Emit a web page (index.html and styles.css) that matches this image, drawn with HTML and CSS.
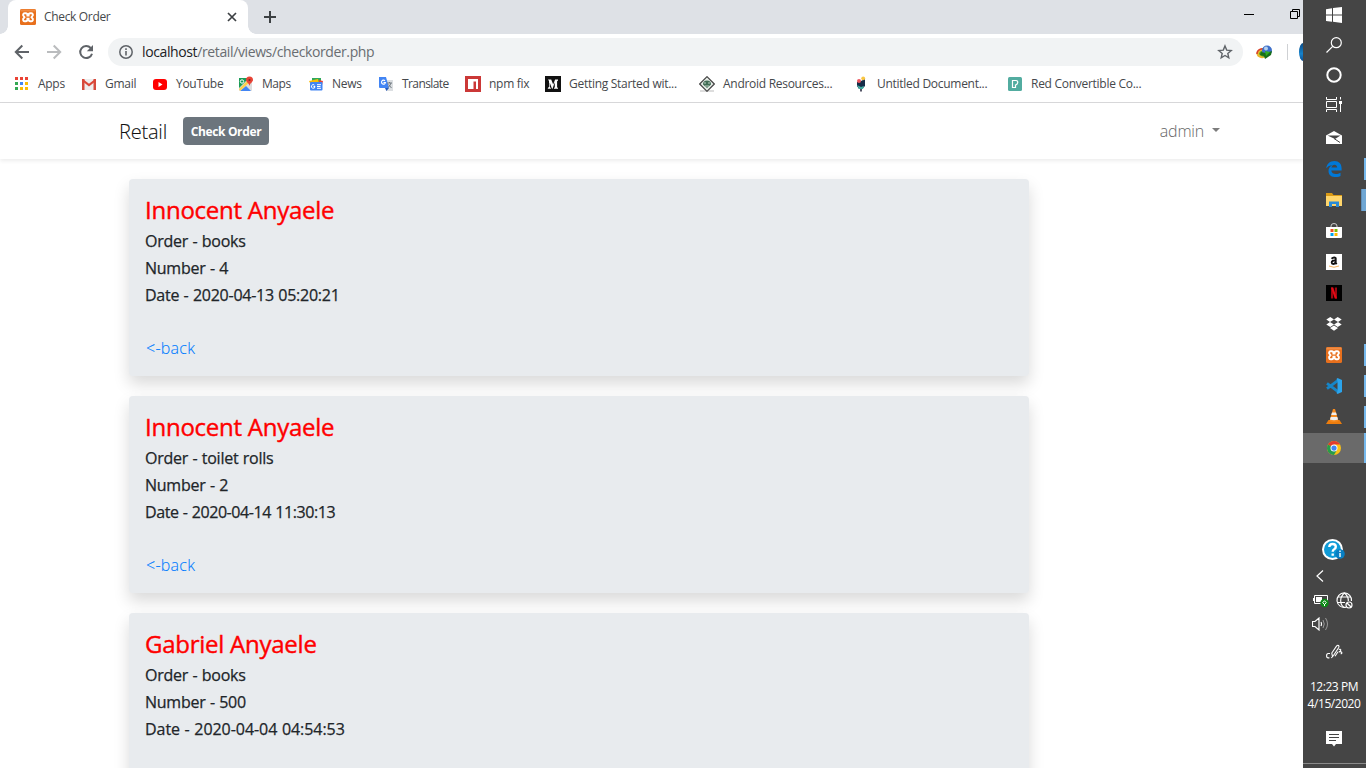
FILE: index.html
```html
<!DOCTYPE html>
<html lang="en">
<head>
<meta charset="utf-8">
<title>Check Order</title>
<link rel="stylesheet" href="styles.css">
</head>
<body>
<svg class="defs" width="0" height="0">
  <symbol id="xampp" viewBox="0 0 16 16"><rect width="16" height="16" rx="1.5" fill="#e8701d"/><rect x=".5" y=".5" width="15" height="2" fill="#f08c45"/><path d="M4.600 4.200h1.200a1.600 1.600 0 0 1 1.600 1.600v.8h1.200v-.8a1.600 1.600 0 0 1 1.600-1.600h1.200a1.700 1.700 0 0 1 .8 3.100l-.7.9.7.9a1.700 1.700 0 0 1-.8 3.100h-1.200a1.600 1.600 0 0 1-1.600-1.600v-.8H7.400v.8a1.600 1.600 0 0 1-1.600 1.600H4.600a1.700 1.700 0 0 1-.8-3.100l.7-.9-.7-.9a1.700 1.700 0 0 1 .8-3.100z" fill="none" stroke="#fff" stroke-width="1.900"/></symbol>
</svg>
<div class="screen">
<main class="browser">
  <header class="tabs">
    <div class="tab">
      <svg class="i16"><use href="#xampp"/></svg>
      <span class="tab-title">Check Order</span>
      <svg class="tab-close" width="10" height="10" viewBox="0 0 10 10"><path d="M1 1l8 8M9 1l-8 8" stroke="#3c4043" stroke-width="1.700"/></svg>
    </div>
    <svg class="new-tab" width="12" height="12" viewBox="0 0 12 12"><path d="M6 0v12M0 6h12" stroke="#3c4043" stroke-width="2"/></svg>
    <svg class="win-min" width="10" height="11" viewBox="0 0 10 11"><path d="M0 5.500h10" stroke="#000"/></svg>
    <svg class="win-max" width="10" height="10" viewBox="0 0 10 10"><path d="M.5 2.500h7v7h-7zM2.500 2.500v-2h7v7h-2" fill="none" stroke="#000"/></svg>
  </header>
  <div class="toolbar">
    <svg class="back" width="16" height="16" viewBox="0 0 16 16"><path d="M15 8H2M8.300 1.500L1.800 8l6.500 6.500" fill="none" stroke="#5f6368" stroke-width="2"/></svg>
    <svg class="forward" width="16" height="16" viewBox="0 0 16 16"><path d="M1 8h13M7.700 1.500L14.200 8l-6.500 6.500" fill="none" stroke="#babcbe" stroke-width="2"/></svg>
    <svg class="reload" width="16" height="16" viewBox="0 0 16 16"><path d="M12.700 4A6 6 0 1 0 14 9.700" fill="none" stroke="#5f6368" stroke-width="2"/><path d="M15 1v6.200H8.800z" fill="#5f6368"/></svg>
    <div class="omnibox">
      <svg width="16" height="16" viewBox="0 0 16 16"><circle cx="8" cy="8" r="6.200" fill="none" stroke="#5f6368" stroke-width="1.500"/><path d="M8 7v4.500M8 4.300v1.600" stroke="#5f6368" stroke-width="1.600"/></svg>
      <span class="url"><b>localhost</b>/retail/views/checkorder.php</span>
      <svg class="star" width="16" height="16" viewBox="0 0 16 16"><path d="M8 1.900l1.700 4.200 4.500.4-3.400 2.900 1 4.400L8 11.500l-3.800 2.300 1-4.400-3.400-2.900 4.500-.4z" fill="none" stroke="#5f6368" stroke-width="1.400"/></svg>
    </div>
    <svg class="idm" width="18" height="16" viewBox="0 0 18 16"><ellipse cx="7" cy="9" rx="6.500" ry="5" fill="#e7b72c" transform="rotate(-15 7 9)"/><path d="M1 10a6 5 0 0 1 8-5" stroke="#d9402d" stroke-width="1.500" fill="none"/><path d="M3 10q1-4 6-3l1 6q-5 0-7-3z" fill="#46a21b"/><circle cx="11" cy="6.500" r="5" fill="#3e70ca"/><circle cx="10" cy="4.500" r="2" fill="#b4d0ed"/><path d="M5 8l5 1 6-2-1 4-6 4-1-3-4-1z" fill="#176f18"/><path d="M9 7l5 1-4 4z" fill="#2fae21"/></svg>
    <i class="divider"></i>
    <div class="avatar"></div>
  </div>
  <nav class="bookmarks">
    <a><svg class="i16" viewBox="0 0 16 16"><path d="M1 1h3v3H1zM6 1h3v3H6zM11 1h3v3h-3z" fill="#ea4335"/><path d="M1 6h3v3H1zM1 11h3v3H1z" fill="#34a853"/><path d="M6 6h3v3H6z" fill="#4285f4"/><path d="M11 6h3v3h-3zM11 11h3v3h-3zM6 11h3v3H6z" fill="#fbbc05"/></svg>Apps</a>
    <a><svg class="i16" viewBox="0 0 16 16"><path d="M2 3h12v11H2z" fill="#eee"/><path d="M1 14V3h2.500v11zM12.500 14V3H15v11z" fill="#d54b3d"/><path d="M1.500 4L8 9l6.500-5" fill="none" stroke="#dc4738" stroke-width="2.200"/></svg>Gmail</a>
    <a><svg class="i16" viewBox="0 0 16 16"><rect x="1" y="3" width="14" height="11" rx="3" fill="#f00"/><path d="M6.500 6v5l4-2.500z" fill="#fff"/></svg>YouTube</a>
    <a class="maps"><svg class="i16" viewBox="0 0 16 16"><rect x="1" y="2" width="13" height="13" rx="1" fill="#ddd"/><path d="M1 2h10L1 12z" fill="#1b9c57"/><path d="M2 15l6-5 5 5z" fill="#4285f4"/><path d="M1 13L11 3l2 2L2 15z" fill="#ffd04b"/><circle cx="4" cy="5.500" r="1.700" fill="none" stroke="#fff"/><path d="M8 4a3.500 3.500 0 0 1 7 0c0 2-3 3-3.500 6C11 7 8 6 8 4z" fill="#e94335"/><circle cx="11.500" cy="4" r="1.100" fill="#842d24"/></svg>Maps</a>
    <a><svg class="i16" viewBox="0 0 16 16"><path d="M4 2h9v5H4z" fill="#2fa85a"/><path d="M1 5l9-2 1 4H2z" fill="#fbbc05"/><path d="M11 4l4 1-1 4h-3z" fill="#ea4335"/><rect x="2" y="6" width="12.500" height="8.500" rx="1" fill="#4285f4"/><path d="M6.500 9.200A1.800 1.800 0 1 0 7 10.500H5.500M9 8.700h4M9 10.500h3.500M9 12.300h4" fill="none" stroke="#fff"/></svg>News</a>
    <a class="translate"><svg class="i16" viewBox="0 0 16 16"><path d="M6 4h9v11H8z" fill="#dcdfe2"/><path d="M1 1h7l3 11H2q-1 0-1-1z" fill="#4285f4"/><path d="M7 12h4l-2.500 3z" fill="#2559b8"/><path d="M7 4.800A2 2 0 1 0 7.500 6.500H5.500" fill="none" stroke="#fff" stroke-width="1.100"/><path d="M9 7h5M11.500 6v1M13 7q-1 3-3 4.500M10.500 8.500l3 3.500" fill="none" stroke="#707980"/></svg>Translate</a>
    <a><svg class="i16" viewBox="0 0 16 16"><path fill="#cb3837" d="M0 0h16v16H0z"/><path fill="#fff" d="M3 3h10v10h-2V5.500H8.500V13H3z"/></svg>npm fix</a>
    <a><svg class="i16" viewBox="0 0 16 16"><path fill="#111" d="M0 0h16v16H0z"/><path d="M3 3.500h3.200l2 5 1.900-5H13v1l-.9.800v6l.9.700v.8H9V12l.8-.7V6.200L7.500 12.800H7L4.700 6.500v4.300l1.200 1.500v.5H2.800v-.5L4 10.800V5z" fill="#fff"/></svg>Getting Started wit...</a>
    <a><svg class="i16" viewBox="0 0 16 16"><path d="M1 14h14v2H1z" fill="#ddd"/><path d="M8 .7L15.300 8 8 15.300.7 8z" fill="#e7ede8" stroke="#444" stroke-width="1.200"/><path d="M4 8.500a4 4 0 0 1 8 0L8 12z" fill="#426d56"/><path d="M5 7h2M9 7h2M6 10h4" stroke="#bcd0c1"/></svg>Android Resources...</a>
    <a><svg class="i16" viewBox="0 0 16 16"><path d="M4 6l4-1 4-2v7l-3 3H6l-2-3z" fill="#152c48"/><circle cx="6" cy="5" r="2" fill="#ed555f"/><circle cx="10.200" cy="2.300" r="1.900" fill="#f9c642"/><path d="M4 9l4 2 3-1-1 3H6z" fill="#40aaa0"/><path d="M7 13h2v2.500H7z" fill="#556"/></svg>Untitled Document...</a>
    <a><svg class="i16" viewBox="0 0 16 16"><rect x="1" y="1" width="14" height="14" rx="1.500" fill="#52aca0"/><path d="M5.500 4.500h3.500q2 0 1.700 2.200-.3 1.800-2.200 2.300v2.500h-3z" fill="none" stroke="#fff" stroke-width="1.200"/></svg>Red Convertible Co...</a>
  </nav>
  <section class="page">
    <header class="navbar">
      <span class="brand">Retail</span><span class="check">Check Order</span>
      <span class="admin">admin</span><i class="caret"></i>
    </header>
    <div class="cards">
      <article class="card"><h4>Innocent Anyaele</h4><h6>Order - books</h6><h6>Number - 4</h6><h6>Date - 2020-04-13 05:20:21</h6><a>&lt;-back</a></article>
      <article class="card"><h4>Innocent Anyaele</h4><h6>Order - toilet rolls</h6><h6>Number - 2</h6><h6 class="narrow">Date - 2020-04-14 11:30:13</h6><a>&lt;-back</a></article>
      <article class="card"><h4>Gabriel Anyaele</h4><h6>Order - books</h6><h6>Number - 500</h6><h6 class="wide">Date - 2020-04-04 04:54:53</h6></article>
    </div>
  </section>
</main>
<aside class="taskbar">
  <div class="sys"><svg class="i16" viewBox="0 0 16 16"><path fill="#fff" d="M0 2.200L6 1.300v6.200H0zM7 1.100L16 0v7.500H7zM0 8.500h6v6.200l-6-.8zM7 8.500h9V16l-9-1.200z"/></svg></div>
  <div class="sys"><svg class="i16" viewBox="0 0 16 16"><g fill="none" stroke="#fff" stroke-width="1.200"><circle cx="10.300" cy="5.700" r="5"/><path d="M6.700 9.300L.5 15.500"/></g></svg></div>
  <div class="sys"><svg class="i16" viewBox="0 0 16 16"><circle cx="8" cy="8" r="6.700" fill="none" stroke="#fff" stroke-width="2"/></svg></div>
  <div class="sys"><svg class="i16" viewBox="0 0 16 16"><g fill="none" stroke="#fff"><path d="M.5 0v2.500h10V0M.5 4.500h10v6H.5zM.5 15v-2.500h10V15M14.500 0v2.500M14.500 7v8"/></g><path fill="#fff" d="M13 4h3v3h-3z"/></svg></div>
  <div class="mail"><svg class="i16" viewBox="0 0 16 16"><path fill="#fff" d="M0 5.500L8 1l8 4.500V14H0z"/><path fill="#454545" d="M1.500 5.500h13L9 9z"/><path d="M8 8.500l6 4" stroke="#454545"/></svg></div>
  <div class="app run"><svg class="i16" viewBox="0 0 16 16"><path fill="#0078d7" d="M.2 7.300C.8 2.800 4 0 8.400 0 13 0 15.600 3.100 15.600 7.200v2.300H5.300c.2 4 5.800 4.400 9.200 2.200v3.200c-5 2.600-12 1-12-5 0-2.600 1.500-4.600 3.700-5.600Q2.800 4.100.2 7.300zM5.400 6.600h5.800c0-3.900-5.300-3.900-5.800 0z"/></svg></div>
  <div class="app run multi"><svg class="i16" viewBox="0 0 16 16"><path fill="#d99a16" d="M0 1h6l1.500 2H16v3H0z"/><path fill="#ffd66b" d="M0 4h16v10H0z"/><path fill="#2b8bd6" d="M3 15V9.500h10V15h-3v-3H6v3z"/></svg></div>
  <div class="app"><svg class="i16" viewBox="0 0 16 16"><path d="M5 5V3q0-2.500 3-2.500T11 3v2" fill="none" stroke="#ccc"/><path fill="#fff" d="M0 4h16v10q0 1-1 1H1q-1 0-1-1z"/><path fill="#f25022" d="M4.500 6h3v3h-3z"/><path fill="#7fba00" d="M8.500 6h3v3h-3z"/><path fill="#00a4ef" d="M4.500 10h3v3h-3z"/><path fill="#ffb900" d="M8.500 10h3v3h-3z"/></svg></div>
  <div class="app"><svg class="i16" viewBox="0 0 16 16"><path fill="#fff" d="M0 0h16v16H0z"/><path d="M5.500 4.700Q8 2.500 9.700 4.200V9l1 1.200M9.500 6.500C7 6.300 5.700 7 5.700 8.500c0 2 2.800 2 3.800 0" fill="none" stroke="#111" stroke-width="1.900"/><path d="M3 12q5 2.500 10 0" fill="none" stroke="#f6b45e"/></svg></div>
  <div class="app"><svg class="i16" viewBox="0 0 16 16"><path d="M0 0h16v16H0z"/><path fill="#9f0710" d="M5 2.500h2.200v11H5zM8.800 2.500H11v11H8.800z"/><path fill="#e50914" d="M5 2.500h2.200l3.800 11H8.800z"/></svg></div>
  <div class="app"><svg class="i16" viewBox="0 0 16 16"><path fill="#fff" d="M4.300 1L8 3.500 4 6 .3 3.500zM11.700 1l4 2.500L12 6 8 3.500zM4 6l4 2.500L4.300 11 .3 8.500zM12 6l3.700 2.500-4 2.500L8 8.500zM8 9.500l4 2.500-4 2.800L4 12z"/></svg></div>
  <div class="app run"><svg class="i16"><use href="#xampp"/></svg></div>
  <div class="app run"><svg class="i16" viewBox="0 0 16 16"><path d="M1 5.300L12 13.700M1 10.700L12 2.300" stroke="#1686c8" stroke-width="2.800"/><path fill="#2ba4ec" d="M11.500 0L16 2v12l-4.500 2-1-1 1-2V3l-1-2z"/></svg></div>
  <div class="app run"><svg class="i16" viewBox="0 0 16 16"><path fill="#ed7d0d" d="M2.500 11h11L16 15H0z"/><path fill="#f68b1f" d="M7 0h2l3.500 12q-4.500 2-9 0z"/><path fill="#eee" d="M6 3.500h4l.8 2.500H5.200zM4.700 8h6.600l.7 2.500Q8 12 4 10.500z"/></svg></div>
  <div class="app run active"><svg width="14" height="14" viewBox="0 0 16 16"><circle cx="8" cy="8" r="8" fill="#fbc116"/><path fill="#e33b2e" d="M8 8L1.100 4A8 8 0 0 1 14.900 4H8z"/><path fill="#269b4c" d="M1.100 4A8 8 0 0 0 8 16l3.500-6z"/><circle cx="8" cy="8" r="4" fill="#fff"/><circle cx="8" cy="8" r="3" fill="#4285f4"/></svg></div>
  <div class="tray">
    <svg class="help" width="24" height="22" viewBox="0 0 24 22"><circle cx="10.500" cy="10.500" r="10.500" fill="#fff"/><circle cx="10.500" cy="10.500" r="8.500" fill="#109bd7"/><path d="M7.300 8q.2-3 3.300-3 3.200 0 3.200 2.700 0 1.500-1.600 2.500-1.500.8-1.500 2.600M10.700 14.500v2.200" fill="none" stroke="#fff" stroke-width="2.400"/><circle cx="18" cy="15" r="4.800" fill="#087fc3"/><path d="M18 14v4M18 11.500v1.500" stroke="#fff" stroke-width="1.400"/></svg>
    <svg class="chev" width="8" height="12" viewBox="0 0 8 12"><path d="M7 .5L1 6l6 5.500" fill="none" stroke="#fff" stroke-width="1.200"/></svg>
    <div class="net">
      <svg width="16" height="16" viewBox="0 0 16 16"><path d="M1.500 3.500h13v8h-13z" fill="none" stroke="#fff"/><path fill="#fff" d="M3 5h6v5H3zM0 6h1v3H0z"/><circle cx="11.500" cy="11" r="4.200" fill="#0c8a16"/><path d="M11.500 8.700l1.800 2-1.800 1.800-1.800-1.800zM11.500 12v2" fill="none" stroke="#fff"/></svg>
      <svg width="17" height="17" viewBox="0 0 17 17"><g fill="none" stroke="#fff" stroke-width="1.150"><path d="M10 15.200A7.300 7.300 0 1 1 15.500 9"/><path d="M8.500 1C3.500 5 3.500 12 8 15.500M8.500 1c3 2.500 4 5 3.800 8M2 5h13M1 10.500h8"/><circle cx="13" cy="13" r="3"/><path d="M11 11l4 4"/></g></svg>
    </div>
    <svg class="sound" width="17" height="14" viewBox="0 0 17 14"><path d="M.5 4.500H3l4-3.500v12L3 9.500H.5zM9 5q1 2 0 4" fill="none" stroke="#fff" stroke-width="1.150"/><path d="M11 3q2.500 4 0 8M13.500 1q4 6 0 12" fill="none" stroke="#999"/></svg>
    <svg class="pen" width="17" height="16" viewBox="0 0 17 16"><path d="M4 9.500H2.200Q.6 9.500.6 11.700t1.600 2.200h1.200M6.500 12.500L5.800 9l4.700-6.800Q11.600.8 12.600 1.500q.8.800 0 2.200L7.500 11.500 5.300 14M9 12.300L12 7.700M12.800 5.500q2-.8 2 .5 0 1.200-2 2 2.800-.7 3.100.8 0 .9-1.200.8" fill="none" stroke="#fff" stroke-width="1.100"/></svg>
    <div class="clock"><span class="time">12:23 PM</span><span class="date">4/15/2020</span></div>
    <svg class="note" width="16" height="16" viewBox="0 0 16 16"><path fill="#fff" d="M0 0h16v13h-6l-2 2.500L6 13H0z"/><path d="M3 3.500h10M3 6.500h10M3 9.500h7" stroke="#444"/></svg>
  </div>
</aside>
</div>
</body>
</html>
```
FILE: styles.css
```css
* { box-sizing: border-box; }
body { margin: 0; background: #fff; font-family: "Open Sans", "Noto Sans", sans-serif; }
svg { display: block; flex: none; }
.defs { position: absolute; }
.i16 { width: 16px; height: 16px; }
.screen { display: grid; grid-template-columns: 1303px 63px; height: 768px; overflow: hidden; }
.browser { display: flex; flex-direction: column; height: 768px; overflow: hidden; }

.tabs { display: flex; flex: none; height: 34px; background: #dee1e6; padding-left: 8px; }
.tab { position: relative; display: flex; align-items: center; width: 240px; height: 34px; padding-left: 12px; background: #fff; border-radius: 8px 8px 0 0; }
.tab::before, .tab::after { content: ""; position: absolute; bottom: 0; width: 8px; height: 8px; }
.tab::before { left: -8px; background: radial-gradient(circle at 0 0, #dee1e6 7.5px, #fff 8px); }
.tab::after { right: -8px; background: radial-gradient(circle at 100% 0, #dee1e6 7.5px, #fff 8px); }
.tab-title { width: 183px; margin: -1px 0 0 8px; font-size: 12px; letter-spacing: -.33px; color: #45484c; }
.new-tab { margin: 11px 0 0 16px; }
.win-min { margin: 9px 0 0 auto; }
.win-max { margin: 9px 3px 0 36px; }

.toolbar { display: flex; flex: none; align-items: center; height: 37px; padding: 0 0 1px 14px; }
.forward, .reload { margin-left: 16px; }
.omnibox { display: flex; align-items: center; width: 1135px; height: 28px; margin-left: 14px; padding: 0 10px; border-radius: 14px; background: #f1f3f4; }
.url { margin: -2px 0 0 8px; font-size: 14px; letter-spacing: -.38px; color: #696d71; white-space: nowrap; }
.url b { font-weight: 400; color: #202124; }
.star { margin-left: auto; }
.idm { margin-left: 13px; }
.divider { width: 1px; height: 16px; margin-left: 13px; background: #cfd1d4; }
.avatar { width: 4px; height: 18px; margin-left: auto; border-radius: 4px 0 0 4px / 9px 0 0 9px; background: linear-gradient(#0d4982, #1583cc 60%, #0b4d91); }

.bookmarks { display: grid; grid-template-columns: 67px 71px 86px 70px 70px 87px 80px 154px 154px 154px auto; flex: none; height: 32px; padding: 0 0 6px 14px; border-bottom: 1px solid #d9d9db; align-items: center; }
.bookmarks a { display: flex; align-items: center; gap: 8px; font-size: 12px; line-height: 16px; letter-spacing: -.28px; color: #45484c; white-space: nowrap; }
.bookmarks .maps { letter-spacing: -.45px; }
.bookmarks .translate { letter-spacing: -.6px; }

.page { flex: 1; min-height: 0; }
.navbar { display: flex; align-items: center; height: 56px; padding: 0 83px 0 119px; box-shadow: 0 2px 4px rgba(0,0,0,.075); }
.brand { width: 64px; font-size: 20px; font-weight: 300; letter-spacing: -.2px; color: #111; -webkit-text-stroke: .1px #111; }
.check { width: 86px; height: 28px; border-radius: 4px; background: #6c757d; color: #fff; font-size: 12px; font-weight: 700; line-height: 29px; text-align: center; letter-spacing: -.35px; }
.admin { margin-left: auto; font-size: 16px; font-weight: 300; color: #666; letter-spacing: -.2px; }
.caret { margin: -2px 0 0 8px; border: 4.5px solid transparent; border-top-color: #7c7c7c; border-bottom: 0; }
.cards { display: flex; flex-direction: column; gap: 20px; padding: 20px 0 0 129px; }
.card { width: 900px; height: 197px; flex: none; padding: 16px; border-radius: 4px; background: #e8ebee; box-shadow: 0 8px 16px rgba(0,0,0,.15); color: #212529; }
.card h4 { margin: 0 0 8px; font-size: 24px; line-height: 29px; font-weight: 400; letter-spacing: -.25px; color: #f00; -webkit-text-stroke: .4px #f00; }
.card h6 { margin: 0 0 8px; font-size: 16px; line-height: 19px; font-weight: 400; letter-spacing: -.25px; word-spacing: .5px; -webkit-text-stroke: .25px #212529; }
.card .narrow { letter-spacing: -.42px; }
.card .wide { letter-spacing: -.05px; }
.card a { display: block; margin-top: 31px; padding-left: 1px; font-size: 16px; line-height: 24px; font-weight: 300; letter-spacing: .25px; color: #007bff; -webkit-text-stroke: .1px #007bff; }

.taskbar { display: flex; flex-direction: column; height: 768px; background: #454545; color: #fff; }
.sys, .mail, .app { display: flex; flex: none; align-items: center; justify-content: center; height: 30px; padding-right: 1px; }
.mail { height: 33px; padding-top: 3px; }
.app { position: relative; height: 31px; padding-top: 1px; }
.run::after { content: ""; position: absolute; right: 0; top: 5px; width: 2px; height: 22px; background: #76b9ed; }
.multi::after { width: 4px; background: #6fa6d3; border-left: 1px solid #5d8db7; }
.active { height: 30px; margin-top: 1px; padding: 0 1px 0 0; background: #6a6a6a; }
.active::after { top: 0; height: 30px; }
.tray { display: flex; flex-direction: column; flex: 1; }
.help { margin: 76px 0 0 19px; }
.chev { margin: 9px 0 0 13px; }
.net { display: flex; gap: 7px; height: 17px; margin: 10px 0 0 10px; }
.sound { margin: 8px 0 0 9px; }
.pen { margin: 13px 0 0 23px; }
.clock { display: flex; flex-direction: column; align-items: center; width: 62px; margin-top: 18px; font-size: 12px; line-height: 17px; letter-spacing: -.45px; white-space: nowrap; }
.note { margin: 19px 0 0 23px; }
.tray::after { content: ""; height: 1px; margin-top: auto; margin-bottom: 4px; background: #8a8a8a; }
```
